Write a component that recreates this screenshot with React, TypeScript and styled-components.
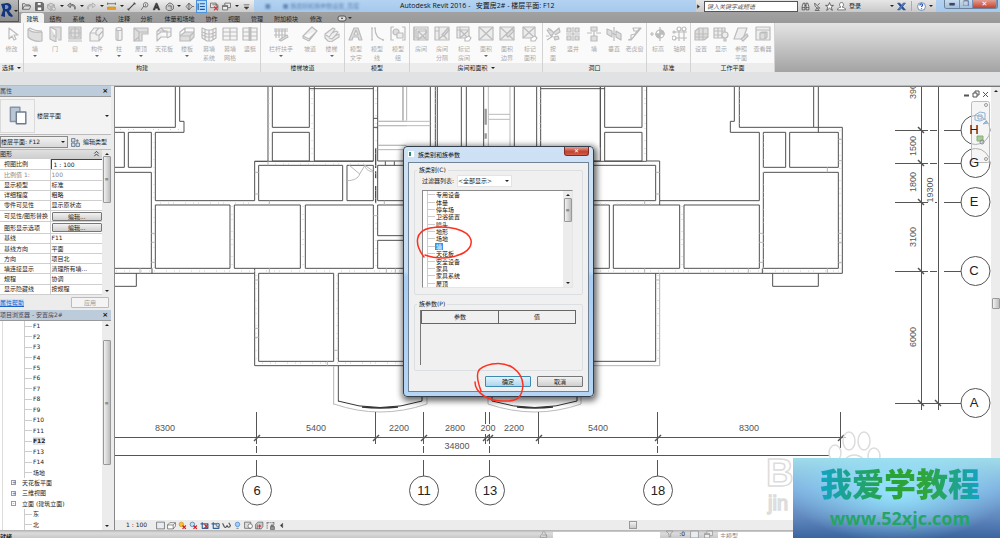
import React from 'react';
import styled, { createGlobalStyle } from 'styled-components';

const ui = '"DejaVu Sans", "Noto Sans CJK SC", sans-serif';
const drafting = '"Liberation Sans", "Noto Sans CJK SC", sans-serif';

const Global = createGlobalStyle`
  *, *::before, *::after { box-sizing: border-box; }
  body { margin: 0; background: #fff; color: #222; font: 6px/8px ${ui}; overflow: hidden; }
  button, input, select { font: inherit; color: inherit; margin: 0; padding: 0; border: 0; background: none; border-radius: 0; }
  button { cursor: pointer; white-space: nowrap; }
  select { appearance: none; }
  ul { list-style: none; margin: 0; padding: 0; }
  svg { display: block; flex: none; }
`;

const App_ = styled.div`
  position: relative;
  display: flex;
  flex-direction: column;
  height: 100vh;
  overflow: hidden;
`;

/* ---------- icons ---------- */

const G = '#bcbcbc';
const L = '#dedede';

const art: Record<string, React.ReactNode> = {
  cursor: <path d="M5 2v11l3-3 2 4 2-1-2-4h4z" />,
  wall: <path d="M1 3c3 3 8 4 14 3v9C9 16 4 14 1 11zM1 3l2-1c3 2 8 3 12 3" fill={L} />,
  door: <><path d="M3 1h11v13h-3M3 1v12l6 3V4z" fill={L} /><path d="M7 9v2" /></>,
  window: <><path d="M2 1h12v12H2zM1 15h14" fill={L} /><path d="M8 1v12M2 7h12M4 3h8v8H4z" /></>,
  component: <path d="M1 7l4-5h9v8l-4 5H1zM1 7h6V5l3-3M7 9v-2M7 9h3l4-4M10 9v6" fill="#f1f1f1" />,
  column: <path d="M5 3c0-2 6-2 6 0v10c0 2-6 2-6 0zM5 3c0 2 6 2 6 0M7 5v9" fill="#f1f1f1" />,
  roof: <><path d="M1 2h14v6H9v7H1z" fill={L} /><path d="M1 2l5 4h9M6 6v9M1 15l5-4" /></>,
  ceiling: <><path d="M1 5l4-3h10v8l-4 2M1 5v10l4-4h6V5z" fill="#f4f4f4" /><path d="M1 9l4-3h10M5 2l4 4" /></>,
  floor: <><path d="M1 10l5-4h9v5l-4 4H1z" fill={L} /><path d="M1 10V6l5-4h9v4M6 2v4M1 10h10v5M11 10l4-4" /></>,
  curtain: <><path d="M1 2l5 2 4 0 5-2v10l-5 3H6l-5-3z" fill="#f4f4f4" /><path d="M4 3v11M8 4v11M12 3v11M1 6l5 2h4l5-2M1 9l5 2h4l5-2" /></>,
  grid: <><path d="M1 2h14v12H1z" fill="#f4f4f4" /><path d="M1 6h14M1 10h14M8 2v12" /></>,
  mullion: <><path d="M1 2h14v12H1z" fill="#f4f4f4" /><path d="M1 6h14M1 10h14" /><path d="M8 1v14" strokeWidth="3" /></>,
  railing: <><path d="M1 3h14M1 5h14M1 9h12M3 3v9M6 3v9M9 3v9M12 3v9" /><path d="M6 14l8-5 1 2-7 4z" fill={L} /></>,
  ramp: <path d="M1 10l9-9 5 4-8 10-6-3zM1 10l6 3 8-8" fill="#eee" />,
  stair: <path d="M1 8l8-6 2 1-3 4 4-2 2 1-3 4 4-2v3l-8 5-3-1-3-3zM2 9l3 2 3-4M5 12l3 1 3-3" fill="#eee" />,
  textA: <path d="M1 14L6 2h4l4 12h-3l-1-3H5l-1 3zM6 9h4L8 4z" fill={L} />,
  line: <path d="M3 2v12M6 2c0 7 3 11 9 12M2 2h2M2 14h2M5 2h2M14 13v2" />,
  group: <><path d="M4 1H1v13h3M12 1h3v13h-3" /><circle cx="6" cy="6" r="3" fill={L} /><path d="M7 7h6v5H7z" fill="#eee" /></>,
  room: <><path d="M1 1h14v13H1zM3 3h10v9H3z" fill="#ececec" /><path d="M1 1v13M5 5h9M5 5v9M5 5l9 9M14 6l-9 8" /></>,
  roomSep: <><path d="M1 1h14v13H1z" fill="#ececec" /><path d="M5 1v13M1 5h4M5 13l9-8M8 8l5 5" /><path d="M8 9l6-7 1 2-5 6z" fill={L} /></>,
  roomTag: <><path d="M1 1h12v11H1z" fill="#ececec" /><path d="M1 4h12M4 1v11M4 4l8 8M12 5l-8 7" /><path d="M9 12l4-2 2 2-2 3H9z" fill="#fff" /></>,
  area: <><path d="M1 1h14v13H1z" fill="#ececec" /><path d="M1 1l14 13M15 1L1 14" /></>,
  areaLine: <><path d="M1 1h14v13H1z" fill="#ececec" /><path d="M1 1l14 13M15 1L1 14" /><path d="M7 9l6-6 2 2-6 6z" fill={L} /></>,
  areaTag: <><path d="M1 1h12v11H1z" fill="#ececec" /><path d="M1 1l12 11M13 1L1 12" /><path d="M9 12l4-2 2 2-2 3H9z" fill="#fff" /></>,
  byFace: <><path d="M2 4h4l3 3-3 3zM8 7l6-5 1 4-5 3M2 14l6-4M9 11l4-1 1 3-4 1z" fill={L} /><path d="M3 2l3 2M1 10h3" /></>,
  shaft: <path d="M2 2h4v4H2zM10 2h4v4h-4zM2 10h4v4H2zM10 10h4v4h-4zM8 1v14M1 8h14" fill={L} />,
  wallOpen: <path d="M5 1h6v4H5zM5 10h6v5H5zM1 7h5M10 7h5M8 5v5" fill={L} />,
  vertical: <path d="M1 3l5 2v6L1 8zM10 5l5 3v6l-5-3zM8 1v14M6 7l4 2" fill={L} />,
  dormer: <path d="M1 14l3-1V9l4-1 5-6h-7M1 14h3l10-12h-8l1 3h5" />,
  level: <><path d="M0 8h4M2 6v4" /><circle cx="10" cy="8" r="4" fill="#fff" /><path d="M10 4v4h4a4 4 0 0 0-4-4M10 12V8H6a4 4 0 0 0 4 4" fill={G} /><path d="M10 1v14M5 8h10" /></>,
  axis: <><path d="M3 6h12M3 12h12M7 4v11M12 4v11" /><circle cx="7" cy="3" r="2" fill="#fff" /><circle cx="12" cy="3" r="2" fill="#fff" /><circle cx="2" cy="6" r="1" /><circle cx="2" cy="12" r="2" fill="#fff" /></>,
  plane: <><path d="M2 5l4-3h9v9l-4 3H2z" fill={L} /><path d="M2 8h13M2 11h13M6 2v12M10 2v12" /></>,
  show: <><path d="M1 2h11v10H1z" fill="#eee" /><path d="M1 5h11M1 9h11M5 2v10M9 2v10" /><circle cx="12" cy="9" r="3" fill="#eee" /><path d="M11 13h2v2h-2z" /></>,
  refPlane: <><path d="M5 2h9l-4 11H1z" fill="#eee" /><path d="M8 13l6-5 1 2-5 5z" fill={L} /></>,
  viewer: <><path d="M1 1h14v13H1zM1 4h14" fill="#eee" /><path d="M5 7l2-1h5v5l-2 2H5zM5 7h5v6M10 7l2-1" fill={L} /></>,
  open: <path d="M1 13V3h4l2 2h6v2M1 13l3-6h12l-3 6z" fill="#ddd" />,
  save: <><path d="M1 1h12l2 2v12H1z" fill="#777" /><path d="M4 1h7v5H4zM4 9h8v6H4z" fill="#fff" /></>,
  sync: <><path d="M1 5l6-3 6 3v6l-6 4-6-4zM1 5l6 3 6-3M7 8v7" fill="#ccc" /><circle cx="12" cy="12" r="3" fill="#ddd" /></>,
  undo: <path d="M6 2L1 6l5 4V7c5-1 8 0 8 6 2-5 0-9-8-9z" fill="#bbb" />,
  redo: <path d="M10 2l5 4-5 4V7c-5-1-8 0-8 6-2-5 0-9 8-9z" fill="#ddd" />,
  measure: <><path d="M1 3h14M1 1v4M15 1v4" stroke="#444" /><path d="M1 9h14v4H1z" fill="#e8a526" stroke="#c18612" /></>,
  dim: <path d="M2 14L14 2M1 12l3 3M12 1l3 3" strokeWidth="2" />,
  tag: <><circle cx="10" cy="5" r="4" fill="#eee" /><path d="M7 7l-5 7M10 3v5" /></>,
  bigA: <path d="M2 14L7 2h2l5 12h-3l-1-3H6l-1 3zM7 8h2L8 5z" fill="#333" />,
  house: <><path d="M2 7l5-5h4l4 4v6l-4 3H5l-3-3z" fill="#ccc" /><path d="M5 7h6v6" /></>,
  section: <path d="M7 2l6 6-6 6-5-6zM7 2v12M13 8h3" fill="#ccc" />,
  thin: <><path d="M2 2v12" stroke="#235a9b" strokeWidth="2" /><path d="M5 3h9M5 8h9M5 13h9" stroke="#235a9b" strokeWidth="2" /></>,
  closeWin: <><path d="M1 2h10v8H1zM4 5h10v8" fill="#eee" /><path d="M7 8l7 7M14 8l-7 7" stroke="#d33" strokeWidth="2" /></>,
  windows: <path d="M1 6h9v8H1zM5 6V2h10v8h-5M1 8h9" fill="#eee" />,
  custom: <><path d="M3 5h10" /><path d="M4 9h8l-4 4z" fill="#333" /></>,
  right: <path d="M4 2l8 6-8 6z" fill="#222" />,
  binocular: <path d="M2 14V8l2-6h3v12zM9 14V2h3l2 6v6zM7 6h2M2 10h5M9 10h5" fill="#ddd" />,
  dish: <path d="M3 2c0 7 3 9 9 9zM8 6l4-4M7 11l-3 4h7z" fill="#ddd" />,
  star: <path d="M8 1l2 5h5l-4 3 2 6-5-4-5 4 2-6-4-3h5z" fill="#fff" />,
  user: <path d="M8 1c5 0 4 7 1 8 4 1 6 2 6 5H1c0-3 2-4 6-5C4 8 3 1 8 1z" fill="#fff" />,
  exchange: <><path d="M1 2h4l10 12h-4z" fill="#244f94" stroke="#244f94" /><path d="M11 2h4L5 14H1z" fill="#5c7fb8" stroke="#244f94" /></>,
  help: <><circle cx="8" cy="8" r="7" fill="#fff" stroke="#3461a8" /><path d="M5 6c0-4 6-3 5 0-1 1-2 1-2 3M8 11v2" stroke="#2457b0" strokeWidth="2" fill="none" /></>,
  sheet: <path d="M1 2h14v12H1z" fill="#e9edf3" />,
  box: <path d="M1 7l4-4h10v6l-4 5H1zM1 7h10v7M11 7l4-4" fill="#fff" />,
  sun: <><circle cx="6" cy="6" r="4" fill="#f6c238" stroke="#c98d15" /><path d="M8 8l6 6M14 8l-6 6" stroke="#c22" strokeWidth="2" /></>,
  shadow: <><circle cx="6" cy="6" r="4" fill="#c8def5" stroke="#2c68ab" /><path d="M8 8l6 6M14 8l-6 6" stroke="#c22" strokeWidth="2" /></>,
  crop: <><path d="M1 5h13v8H4V2" stroke="#335f95" strokeWidth="2" /><path d="M8 6l6 7M14 6l-6 7" stroke="#c22" strokeWidth="2" /></>,
  cropOn: <><path d="M1 5h13v8H4V2" stroke="#335f95" strokeWidth="2" /><circle cx="12" cy="7" r="3" fill="#9ed0ff" /></>,
  glasses: <path d="M1 4l3 6c2 3 4 1 5-2 1 4 5 4 6 0l-3-5" strokeWidth="2" />,
  bulb: <><circle cx="8" cy="6" r="4" fill="#9ed0ff" stroke="#3a7cc0" /><path d="M6 13h4" /></>,
  reveal: <><path d="M1 2h11v11H1z" fill="#ddd" /><circle cx="11" cy="9" r="4" fill="#fff" /></>,
  analytic: <><path d="M1 6l4-4h9v8l-3 4H1zM4 6v8M8 6v8" fill="#ccc" /><path d="M6 9h5" stroke="#c22" strokeWidth="2" /></>,
  constraint: <><path d="M2 14V3h12v5M1 3h3M12 3h3" strokeDasharray="3 1" /><path d="M8 10h7v5H8zM9 10V7h4v3" fill="#999" /></>,
  left: <path d="M10 4v8L6 8z" fill="#333" />,
  typeEdit: <><path d="M1 1h6v6H1zM1 9h6v6H1zM9 9h6v6H9z" fill="#cfe0f3" /><path d="M9 5h5M11 2v6" /></>,
  preview: <><path d="M2 1h8v12H2z" fill="#b9c6d6" stroke="#8794a5" /><path d="M7 5h8v10H7z" fill="#fff" stroke="#6d7b8d" /></>,
  link: <path d="M2 13c0-4 3-4 4-7 0-4 5-4 5 0 1 2 3 3 3 7zM6 9h8" fill="#ddd" />,
  filter: <path d="M2 2h12l-4 5v5H7V7z" fill="#ddd" />,
  collapse: <path d="M3 8l5-5 5 5M3 14l5-5 5 5" strokeWidth="2" />,
};

function Icon({ name, size = 10, tone = '#555' }: { name: string; size?: number; tone?: string }) {
  return (
    <svg width={size} height={size} viewBox="0 0 16 16" fill="none" stroke={tone} strokeWidth="1.2" strokeLinejoin="round" aria-hidden="true">
      {art[name]}
    </svg>
  );
}

const Caret = styled.i<{ $up?: boolean }>`
  width: 0;
  height: 0;
  flex: none;
  border: 2px solid transparent;
  border-top: ${(p) => (p.$up ? '0' : '2px solid #222')};
  border-bottom: ${(p) => (p.$up ? '2px solid #222' : '0')};
`;

/* ---------- title bar and ribbon ---------- */

const Head = styled.header`
  position: relative;
  flex: none;
`;

const TitleBar = styled.div`
  display: flex;
  height: 12px;
  padding-left: 19px;
  background: linear-gradient(#b4d3f2, #a5c8ec);
`;

const QuickBar = styled.div`
  display: flex;
  align-items: center;
  justify-content: space-between;
  width: 235px;
  padding: 0 3px;
  background: linear-gradient(#eee, #cbcbcb);
`;

const IconButton = styled.button<{ $on?: boolean }>`
  display: flex;
  align-items: center;
  justify-content: center;
  height: 11px;
  min-width: 4px;
  background: ${(p) => (p.$on ? '#b9dcff' : 'none')};
  outline: ${(p) => (p.$on ? '1px solid #4c93dc' : 'none')};
`;

const GlassTab = styled.div`
  display: flex;
  align-items: center;
  gap: 12px;
  width: 138px;
  padding-left: 11px;
  overflow: hidden;
  white-space: nowrap;
  color: #5f86b2;
  filter: blur(1px);
`;

const Title = styled.h1`
  flex: 1;
  margin: 0;
  padding-left: 8px;
  font: 7px/12px "Open Sans", "Noto Sans CJK SC", sans-serif;
  white-space: pre;
  color: #111;
`;

const InfoBar = styled.div`
  display: flex;
  align-items: center;
  width: 240px;
  gap: 3px;
  padding-right: 3px;
  margin-right: 8px;
  background: linear-gradient(#e6e6e6, #c9c9c9);
`;

const Search = styled.input`
  width: 94px;
  height: 11px;
  padding: 0 2px;
  border: 1px solid #555;
  background: #fff;
  font-style: italic;
  &::placeholder { color: #555; opacity: 1; }
`;

const WindowButtons = styled.div`
  display: flex;
  height: 9px;
  margin-right: 2px;
  border: 1px solid #6d8199;
  border-top: 0;
  border-radius: 0 0 3px 3px;
  overflow: hidden;
`;

const WindowButton = styled.button<{ $w: number; $close?: boolean }>`
  width: ${(p) => p.$w}px;
  color: ${(p) => (p.$close ? '#fff' : '#445')};
  font-size: 7px;
  line-height: 8px;
  font-weight: bold;
  background: ${(p) => (p.$close ? 'linear-gradient(#e39e93, #c5412d)' : 'linear-gradient(#c9dcf0, #a3bedb)')};
  border-right: 1px solid #7b90aa;
`;

const AppButton = styled.button`
  position: absolute;
  left: 0;
  top: 0;
  display: flex;
  align-items: center;
  width: 19px;
  height: 22px;
  background: linear-gradient(#b9b9b9, #8d8d8d);
  border-right: 1px solid #555;
  border-bottom: 1px solid #555;
`;

const Tabs = styled.nav`
  display: flex;
  align-items: end;
  height: 11px;
  padding-left: 21px;
  background: linear-gradient(#a2a2a2, #999);
`;

const Tab = styled.button<{ $on?: boolean; $w: number }>`
  width: ${(p) => p.$w}px;
  height: 10px;
  line-height: 9px;
  color: ${(p) => (p.$on ? '#111' : '#222')};
  background: ${(p) => (p.$on ? '#f1f1f1' : 'none')};
  border-radius: 2px 2px 0 0;
`;

const RibbonToggle = styled(IconButton)`
  margin-left: 9px;
`;

const Ribbon = styled.div`
  display: flex;
  height: 49px;
  background: linear-gradient(#e4e4e4, #a3a3a3);
`;

const Panel = styled.section`
  display: flex;
  flex-direction: column;
  border-right: 1px solid #d3d3d3;
  background: #fafafa;
`;

const PanelTools = styled.div`
  flex: 1;
  display: flex;
  padding-top: 3px;
`;

const PanelName = styled.h2`
  display: flex;
  align-items: center;
  justify-content: center;
  gap: 3px;
  height: 9px;
  margin: 0;
  font-size: 6px;
  font-weight: 400;
  background: #ececec;
`;

const Tool = styled.button<{ $w: number }>`
  display: flex;
  flex-direction: column;
  align-items: center;
  width: ${(p) => p.$w}px;
  gap: 2px;
  color: #aaa;
  line-height: 9px;
  white-space: pre;
  ${Caret} { opacity: 0.7; }
`;

const OptionsBar = styled.div`
  height: 14px;
  background: #e1e2e4;
  border-bottom: 1px solid #bbb;
`;

type ToolDef = [label: string, icon: string, width: number, menu?: boolean];

const panels: { name: string; menu?: boolean; tools: ToolDef[] }[] = [
  { name: '选择', menu: true, tools: [['修改', 'cursor', 23]] },
  {
    name: '构建',
    tools: [
      ['墙', 'wall', 22, true], ['门', 'door', 18], ['窗', 'window', 22], ['构件', 'component', 22, true],
      ['柱', 'column', 22, true], ['屋顶', 'roof', 22, true], ['天花板', 'ceiling', 24], ['楼板', 'floor', 22, true],
      ['幕墙\n系统', 'curtain', 22], ['幕墙\n网格', 'grid', 20], ['竖梃', 'mullion', 20],
    ],
  },
  { name: '楼梯坡道', tools: [['栏杆扶手', 'railing', 40, true], ['坡道', 'ramp', 18], ['楼梯', 'stair', 25, true]] },
  { name: '模型', tools: [['模型\n文字', 'textA', 22], ['模型\n线', 'line', 20], ['模型\n组', 'group', 22]] },
  {
    name: '房间和面积',
    menu: true,
    tools: [
      ['房间', 'room', 22], ['房间\n分隔', 'roomSep', 20], ['标记\n房间', 'roomTag', 24],
      ['面积', 'area', 20, true], ['面积\n边界', 'areaLine', 22], ['标记\n面积', 'areaTag', 24],
    ],
  },
  {
    name: '洞口',
    tools: [['按\n面', 'byFace', 20], ['竖井', 'shaft', 20], ['墙', 'wallOpen', 22], ['垂直', 'vertical', 18], ['老虎窗', 'dormer', 23]],
  },
  { name: '基准', tools: [['标高', 'level', 22], ['轴网', 'axis', 21]] },
  { name: '工作平面', tools: [['设置', 'plane', 20], ['显示', 'show', 20], ['参照\n平面', 'refPlane', 20], ['查看器', 'viewer', 23]] },
];

const tabs: [string, number][] = [
  ['建筑', 23], ['结构', 23], ['系统', 23], ['插入', 23], ['注释', 22], ['分析', 23], ['体量和场地', 43],
  ['协作', 21], ['视图', 24], ['管理', 22], ['附加模块', 36], ['修改', 24],
];

const quick = ['open', 'save', 'sync', '', 'undo', '', 'redo', '', 'measure', '', 'dim', 'tag', 'bigA', 'house', '', 'section', 'thin', 'closeWin', 'windows', '', 'custom'];

const LoginButton = styled.button`
  flex: 1;
  text-align: left;
`;

const Divider = styled.span`
  width: 1px;
  height: 10px;
  margin: 0 2px;
  background: #aaa;
`;

function RibbonHead() {
  return (
    <Head>
      <TitleBar>
        <QuickBar>
          {quick.map((n, i) => (
            <IconButton key={i} $on={n === 'thin'} aria-label={n || 'menu'}>
              {n ? <Icon name={n} size={9} tone={n === 'redo' || n === 'sync' ? '#999' : '#444'} /> : <Caret />}
            </IconButton>
          ))}
        </QuickBar>
        <GlassTab><span>■</span><span>■ 族类别和族参数设置_百度</span></GlassTab>
        <Title>{'Autodesk Revit 2016 -   安置房2# - 楼层平面: F12'}</Title>
        <InfoBar>
          <Icon name="right" size={5} />
          <Search placeholder="键入关键字或短语" aria-label="键入关键字或短语" />
          <Icon name="binocular" size={9} tone="#333" />
          <Icon name="dish" size={9} tone="#333" />
          <Icon name="star" size={9} tone="#333" />
          <Icon name="user" size={9} tone="#444" />
          <LoginButton>登录</LoginButton>
          <Caret />
          <Icon name="exchange" size={9} />
          <Divider />
          <Icon name="help" size={9} />
          <Caret />
        </InfoBar>
        <WindowButtons>
          <WindowButton $w={15} aria-label="最小化">▬</WindowButton>
          <WindowButton $w={13} aria-label="还原">❐</WindowButton>
          <WindowButton $w={24} $close aria-label="关闭">✕</WindowButton>
        </WindowButtons>
      </TitleBar>
      <AppButton aria-label="应用程序菜单">
        <svg width="14" height="20" viewBox="0 0 14 20">
          <path d="M1 3l6-1c5 0 6 6 2 8l4 5-1 1-3-1-3-5-1 1v5l-4-1 2-6z" fill="#14357c" />
          <path d="M5 4h2c2 1 2 3 0 4H5z" fill="#7e93bd" />
        </svg>
        <Caret />
      </AppButton>
      <Tabs>
        {tabs.map(([t, w], i) => <Tab key={t} $w={w} $on={i === 0}>{t}</Tab>)}
        <RibbonToggle aria-label="最小化功能区">
          <svg width="16" height="8" viewBox="0 0 16 8">
            <rect x="1" y="2" width="8" height="5" rx="2" fill="#ddd" stroke="#555" />
            <path d="M4 5l1-2 1 2zM11 3h4l-2 2z" fill="#333" />
          </svg>
        </RibbonToggle>
      </Tabs>
      <Ribbon>
        {panels.map((p) => (
          <Panel key={p.name}>
            <PanelTools>
              {p.tools.map(([label, icon, w, menu]) => (
                <Tool key={label + icon} $w={w}>
                  <Icon name={icon} size={16} tone={G} />
                  <span>{label}</span>
                  {menu && <Caret />}
                </Tool>
              ))}
            </PanelTools>
            <PanelName>{p.name}{p.menu && <Caret />}</PanelName>
          </Panel>
        ))}
      </Ribbon>
      <OptionsBar />
    </Head>
  );
}

/* ---------- side panels ---------- */

const Body = styled.div`
  flex: 1;
  display: flex;
  min-height: 0;
`;

const Side = styled.aside`
  display: flex;
  flex-direction: column;
  flex: none;
  width: 115px;
  padding-right: 3px;
  background: #ececec;
  border-right: 1px solid #888;
`;

const PaneTitle = styled.h2`
  display: flex;
  justify-content: space-between;
  height: 11px;
  margin: 0;
  padding-right: 3px;
  font-size: 6px;
  line-height: 10px;
  font-weight: 400;
  color: #445;
  background: #bdccdb;
  border-bottom: 1px solid #999;
`;

const CloseX = styled.button`
  font-size: 7px;
  font-weight: bold;
  color: #111;
`;

const TypeRow = styled.button`
  display: flex;
  align-items: center;
  gap: 2px;
  height: 38px;
  padding-right: 2px;
  background: #f3f3f3;
  border-bottom: 1px solid #bbb;
`;

const TypeIcon = styled.span`
  display: grid;
  place-items: center;
  width: 35px;
  height: 34px;
  border: 1px solid #dadada;
`;

const Grow = styled.span`
  flex: 1;
  text-align: left;
`;

const InstanceRow = styled.div`
  display: flex;
  align-items: center;
  gap: 3px;
  height: 14px;
`;

const SelectWrap = styled.label<{ $w: number; $flat?: boolean }>`
  display: flex;
  align-items: center;
  width: ${(p) => p.$w}px;
  height: 12px;
  padding-right: 2px;
  background: ${(p) => (p.$flat ? '#fff' : 'linear-gradient(#f2f2f2, #d8d8d8)')};
  border: 1px solid ${(p) => (p.$flat ? '#e3e3e3' : '#888')};
  select { flex: 1; min-width: 0; height: 10px; outline: 0; }
`;

const EditType = styled.button`
  display: flex;
  align-items: center;
  gap: 3px;
`;

const PropsArea = styled.div`
  display: flex;
  height: 146px;
  border-top: 1px solid #bbb;
`;

const PropsTable = styled.table`
  flex: 1;
  height: 145px;
  border-collapse: collapse;
  table-layout: fixed;
  background: #fff;
  th, td { padding: 0; border-bottom: 1px solid #cfcfcf; font-weight: 400; text-align: left; white-space: nowrap; overflow: hidden; line-height: 8px; }
  tbody th { width: 50px; padding-left: 4px; border-right: 1px solid #cfcfcf; }
  tbody td { padding-left: 1px; }
  thead th { background: linear-gradient(#e0e0e0, #cfcfcf); }
`;

const GroupHead = styled.span`
  display: flex;
  justify-content: space-between;
  padding-right: 2px;
`;

const PropRow = styled.tr<{ $dim?: boolean }>`
  color: ${(p) => (p.$dim ? '#888' : '#222')};
`;

const ScaleInput = styled.input`
  display: block;
  width: 100%;
  height: 9px;
  padding-left: 2px;
  outline: 1px solid #444;
`;

const PushButton = styled.button<{ $w?: number; $off?: boolean; $primary?: boolean }>`
  display: block;
  width: ${(p) => (p.$w ? `${p.$w}px` : '100%')};
  height: ${(p) => (p.$w ? 11 : 9)}px;
  line-height: 7px;
  color: ${(p) => (p.$off ? '#999' : '#222')};
  background: ${(p) => (p.$primary ? 'linear-gradient(#e4f3fb, #acd6ee)' : p.$off ? '#f4f4f4' : 'linear-gradient(#f2f2f2, #cfcfcf)')};
  border: 1px solid ${(p) => (p.$primary ? '#3c8ab4' : p.$off ? '#bbb' : '#777')};
  border-radius: 1px;
`;

const HelpRow = styled.div`
  display: flex;
  align-items: center;
  justify-content: space-between;
  height: 15px;
  padding-right: 2px;
  a { color: #1a63c9; background: #cfe2f8; }
`;

const BarBox = styled.div`
  display: flex;
  flex-direction: column;
  align-items: center;
  flex: none;
  width: 9px;
  padding: 3px 0;
  background: #ececec;
`;

const Spacer = styled.span<{ $grow: number }>`
  flex: ${(p) => p.$grow};
`;

const Thumb = styled.span<{ $grow: number }>`
  flex: ${(p) => p.$grow};
  display: grid;
  place-items: center;
  width: 8px;
  min-height: 8px;
  font-size: 5px;
  color: #555;
  background: linear-gradient(90deg, #f0f0f0, #bdbdbd);
  border: 1px solid #999;
  border-radius: 1px;
`;

function Scrollbar({ before, size, after, plain }: { before: number; size: number; after: number; plain?: boolean }) {
  return (
    <BarBox>
      <Caret $up />
      <Spacer $grow={before} />
      <Thumb $grow={size}>{plain ? '' : '≡'}</Thumb>
      <Spacer $grow={after} />
      <Caret />
    </BarBox>
  );
}

const TreeArea = styled.div`
  flex: 1;
  display: flex;
  min-height: 0;
  background: #fff;
`;

const Tree = styled.ul`
  flex: 1;
  display: grid;
  grid-auto-rows: 1fr;
  margin-left: 2px;
  border-left: 1px solid #ddd;
`;

const TreeItem = styled.li<{ $depth: number; $on?: boolean }>`
  display: flex;
  align-items: center;
  gap: ${(p) => (p.$depth > 1 ? 1 : 6)}px;
  margin-left: ${(p) => (p.$depth > 1 ? 21 : 8)}px;
  font-weight: ${(p) => (p.$on ? 700 : 400)};
  border-left: ${(p) => (p.$depth > 1 ? '1px solid #ccc' : '0')};
  span { background: ${(p) => (p.$on ? '#e4e4e4' : 'none')}; }
  &::before {
    content: '';
    width: 7px;
    border-top: 1px solid #ccc;
    display: ${(p) => (p.$depth > 1 ? 'block' : 'none')};
  }
`;

const Toggle = styled.button`
  display: grid;
  place-items: center;
  width: 5px;
  height: 5px;
  font-size: 5px;
  line-height: 3px;
  color: #557;
  border: 1px solid #99a;
`;

const props_: [string, React.ReactNode, boolean?][] = [
  ['视图比例', <ScaleInput aria-label="视图比例" defaultValue="1 : 100" />],
  ['比例值 1:', '100', true],
  ['显示模型', '标准'],
  ['详细程度', '粗略'],
  ['零件可见性', '显示原状态'],
  ['可见性/图形替换', <PushButton>编辑...</PushButton>],
  ['图形显示选项', <PushButton>编辑...</PushButton>],
  ['基线', 'F11'],
  ['基线方向', '平面'],
  ['方向', '项目北'],
  ['墙连接显示', '清理所有墙...'],
  ['规程', '协调'],
  ['显示隐藏线', '按规程'],
];

const floors = Array.from({ length: 14 }, (_, i) => `F${i + 1}`);

function SidePanels() {
  return (
    <Side>
      <PaneTitle>属性<CloseX aria-label="关闭">×</CloseX></PaneTitle>
      <TypeRow>
        <TypeIcon><Icon name="preview" size={19} /></TypeIcon>
        <Grow>楼层平面</Grow>
        <Caret />
      </TypeRow>
      <InstanceRow>
        <SelectWrap $w={68}>
          <select aria-label="实例"><option>楼层平面: F12</option></select>
          <Caret />
        </SelectWrap>
        <EditType><Icon name="typeEdit" size={9} tone="#456" />编辑类型</EditType>
      </InstanceRow>
      <PropsArea>
        <PropsTable>
          <thead>
            <tr><th colSpan={2}><GroupHead>图形<Icon name="collapse" size={7} tone="#333" /></GroupHead></th></tr>
          </thead>
          <tbody>
            {props_.map(([k, v, dim]) => (
              <PropRow key={k} $dim={dim}><th scope="row">{k}</th><td>{v}</td></PropRow>
            ))}
          </tbody>
        </PropsTable>
        <Scrollbar before={1} size={44} after={86} />
      </PropsArea>
      <HelpRow><a href="#help">属性帮助</a><PushButton $w={38} $off>应用</PushButton></HelpRow>
      <PaneTitle>项目浏览器 - 安置房2#<CloseX aria-label="关闭">×</CloseX></PaneTitle>
      <TreeArea>
        <Tree>
          {[...floors, '场地'].map((f) => <TreeItem key={f} $depth={2} $on={f === 'F12'}><span>{f}</span></TreeItem>)}
          <TreeItem $depth={1}><Toggle aria-label="展开">+</Toggle><span>天花板平面</span></TreeItem>
          <TreeItem $depth={1}><Toggle aria-label="展开">+</Toggle><span>三维视图</span></TreeItem>
          <TreeItem $depth={1}><Toggle aria-label="折叠">-</Toggle><span>立面 (建筑立面)</span></TreeItem>
          <TreeItem $depth={2}><span>东</span></TreeItem>
          <TreeItem $depth={2}><span>北</span></TreeItem>
        </Tree>
        <Scrollbar before={14} size={120} after={58} />
      </TreeArea>
    </Side>
  );
}

/* ---------- drawing ---------- */

const Canvas = styled.main`
  position: relative;
  flex: 1;
  display: flex;
  flex-direction: column;
  min-width: 0;
`;

const DrawingRow = styled.div`
  flex: 1;
  display: flex;
  min-height: 0;
  overflow: hidden;
  border-top: 1px solid #777;
`;

const Plan = styled.svg`
  flex: 1;
  min-width: 0;
  height: 100%;
  font-family: ${drafting};
`;

const ViewBar = styled.div`
  display: flex;
  align-items: center;
  gap: 2px;
  height: 10px;
  padding-left: 11px;
  background: #ececec;
`;

const ScaleButton = styled.button`
  width: 28px;
  text-align: left;
`;

const HTrack = styled.div`
  flex: 1;
  display: flex;
  span:first-child { flex: 341; }
  span:last-child { flex: 363; }
`;

const HThumb = styled.i`
  width: 8px;
  height: 8px;
  background: linear-gradient(#f2f2f2, #c8c8c8);
  border: 1px solid #999;
`;

const bubblesX: [number, string][] = [[257, '6'], [424, '11'], [490, '13'], [658, '18']];
const bubblesY: [number, string][] = [[130, 'H'], [163, 'G'], [202, 'E'], [271, 'C'], [403, 'A']];
const dimsX: [number, string][] = [[165, '8300'], [316, '5400'], [399, '2200'], [455, '2800'], [488, '200'], [514, '2200'], [598, '5400'], [749, '8300']];
const dimsY: [number, number, string][] = [[916, 89, '3900'], [916, 146, '1500'], [916, 182, '1800'], [933, 190, '19300'], [916, 237, '3100'], [916, 337, '6000']];

function Drawing() {
  return (
    <Plan viewBox="115 87 876 433" preserveAspectRatio="xMinYMin slice">
      <g fill="none" stroke="#505050" strokeWidth="3">
        <g transform="translate(110 84) scale(.33333)">
          <path d="M15 130H196V8M209 8V112H222V145H136V350H434V232H474V8M15 145H43V250H15M55 145H124V250H55zM15 265H124V553H15M487 8V130H598V8M487 145H598V231H487zM598 14H790M613 8V231H790V8M803 8V231H890M434 232H790M446 244H698V350H446zM711 244H790V350H711zM890 244H803V350H890" />
          <path d="M136 363H360V553H136zM373 363H571V553H373zM586 363H790V553H586zM890 363H803V455H890M890 469H803V553H890M15 568H434V845H890M79 568V607H15M446 568H671V832H446zM890 568H685V832H890M685 846V952M826 232v12M853 232v12M790 103h13M790 130h13M126 553v15M434 553v15" />
          <path d="M797 192v60M797 262v20M797 306v50" strokeWidth="4" />
          <g stroke="#b5b5b5">
            <path d="M671 846V962M803 112H890M878 8V110M890 8V110M803 125H890M803 184H890M803 197H890M711 290c20 0 35-8 38-20L718 244M749 270L765 244 790 262M765 244c0 10 10 18 25 20" />
            <path d="M124 448h12M124 475h12M124 535h12M434 265h12M434 330h12M434 588h12M434 733h12M434 760h12M671 799h14M90 553v15M478 553v15M478 350v13M823 350v13M829 553v15M856 553v15M652 832v13M474 232v12M790 395h13" />
          </g>
        </g>
        <g transform="translate(370 84) scale(.33333)">
          <path d="M181 8V190M202 8V190M196 8V190M274 8V190M289 8V190M341 8V190M433 8V190M500 8V190M512 8V190M512 14H705M691 8V190" />
          <path d="M347 74v48M347 148v16" strokeWidth="7" stroke="#999" />
          <path d="M355 8V190M420 8V190M355 91h65M355 106h65M100 8v102M25 112h156M25 125h156M25 184h80" stroke="#bbb" />
        </g>
        <g transform="translate(590 84) scale(.33333)">
          <path d="M31 8V231M0 231H31M44 8V130H156V8M44 145H156V231H44zM170 8V231H209V350H508V145H421V112H433V8M448 8V130H671V8M685 8V145M671 130H757V568H0M520 145H587V250H520zM599 145H745V250H599zM520 265H745V553H520zM0 232H170M0 244H197V350H0M0 363H58V553H0M70 363H269V553H70zM282 363H508V553H282zM197 568V832H0M548 568V607H685V568M517 553v15M209 350v13" />
          <g stroke="#b5b5b5">
            <path d="M209 568V845H0M745 166h12M745 230h12M712 250v15M745 448h12M745 475h12M745 535h12M508 448h12M508 475h12M508 535h12M197 265h12M197 330h12M164 350v13M164 553v15M475 553v15M712 553v15M197 588h12" />
          </g>
        </g>
      </g>

      {/* fine hatching inside the walls */}
      <g fill="none" stroke="#ccc" strokeWidth="1" strokeDasharray="1 7 1 4 1 11">
        <path d="M120 129.500H180M154 134V270M160 203H252M275 164H370M116 271H590M256 275V362M262 363H400M337 275V360M232 206V268M303 206V268M269 90V160M312 90V160M376 90V270M600 271H840M840 130V270M763 134V268M739 90V128M592 204H655M645 90V160M682 206V268M658 275V362M436 90V145M540 90V145" />
      </g>

      {/* balcony arcs */}
      <g fill="none" stroke="#333">
        <path d="M338 401Q380 414 422 401V396M492 396V401Q535 414 577 401V396" />
        <path d="M362 407Q380 409 398 407M517 407Q535 409 553 407" strokeWidth="1.600" />
        <path d="M334 404Q380 420 427 404V396M488 396V404Q535 420 581 404V396" stroke="#bbb" />
      </g>

      {/* horizontal dimension chains */}
      <g stroke="#555" fill="none">
        <path d="M115 437.500H846M115 455.500H829M840.500 412V448M375.500 412v32M538.500 412v32M485.500 412v12M485.500 434v10" />
        {[257, 376, 424, 486, 490, 539, 658, 841].map((x) => <path key={x} d={`M${x - 3} 441l6-6`} strokeWidth="1.500" />)}
        {bubblesX.map(([x, t]) => (
          <g key={t}>
            <path d={`M${x - 0.5} 412v${t === '13' ? '12' : '32'}M${x - 0.5} 434v10M${x - 0.5} 446v7M${x - 0.5} 460v16`} />
            <circle cx={x} cy="490.500" r="14.500" fill="#fff" />
          </g>
        ))}
      </g>
      <g fill="#222" fontSize="13" textAnchor="middle">
        {bubblesX.map(([x, t]) => <text key={t} x={x} y="495">{t}</text>)}
      </g>
      <g fill="#555" fontSize="9" textAnchor="middle">
        {dimsX.map(([x, t]) => <text key={x} x={x} y="431">{t}</text>)}
        <text x="457" y="449">34800</text>
        {dimsY.map(([x, y, t]) => <text key={y} transform={`translate(${x} ${y}) rotate(-90)`}>{t}</text>)}
      </g>

      {/* vertical dimension chains */}
      <g stroke="#555" fill="none">
        <path d="M921.500 87V410M938.500 87V410M895 403.500H961" />
        {bubblesY.map(([y, t]) => (
          <g key={t}>
            {t !== 'A' && <path d={`M895 ${y + 0.5}h33M${t === 'E' ? 935 : 930} ${y + 0.5}h${t === 'E' ? 2 : 7}M944 ${y + 0.5}h17`} />}
            <path d={`M918 ${y - 3}l6 6`} strokeWidth="1.500" />
            <circle cx="975.500" cy={y} r="14.500" />
          </g>
        ))}
        <path d="M935 400l6 6" strokeWidth="1.500" />
      </g>

      {/* navigation bar and view window buttons */}
      <g fill="none" stroke="#555">
        <path d="M964 95.500h5" strokeWidth="2" />
        <path d="M973 93h4v4h-4zM975 93v-2h4v4h-2M983 92l5 5M988 92l-5 5" />
        <rect x="971.500" y="101.500" width="18" height="61" rx="2" fill="#eee" fillOpacity=".6" stroke="#bbb" />
        <circle cx="986" cy="105" r="1.500" stroke="#999" />
        <circle cx="986" cy="159" r="1.500" stroke="#999" />
        <path d="M975 115l5-3 5 1v6l-5 2-5-1zM978 115h4v4h-4z" stroke="#8fb1d3" />
        <path d="M983 124l3-3 2 2z" fill="#9cc0e4" stroke="#8fb1d3" />
        <path d="M977 136h6v5h-6z" fill="#a4cc93" stroke="#88b078" />
        <circle cx="982" cy="142" r="2" stroke="#889" />
      </g>
      <g fill="#222" fontSize="13" textAnchor="middle">
        {bubblesY.map(([y, t]) => <text key={t} x="974" y={y + 4}>{t}</text>)}
      </g>

      {/* watermark */}
      <g fill="#fff" stroke="#dcdcdc" strokeWidth="1.500">
        <ellipse cx="849" cy="441" rx="6" ry="9" fillOpacity=".6" />
        <ellipse cx="864" cy="441" rx="6" ry="9" fillOpacity=".6" />
        <ellipse cx="835" cy="453" rx="6" ry="8" fillOpacity=".6" />
        <ellipse cx="874" cy="456" rx="6" ry="8" fillOpacity=".6" />
        <path d="M842 470c0-20 24-20 26 0z" />
        <text x="766" y="486" fontSize="38" fontWeight="700">B</text>
        <text x="768" y="510" fontSize="20">jin</text>
      </g>
    </Plan>
  );
}

const viewIcons = ['sheet', 'box', 'sun', 'shadow', 'crop', 'cropOn', 'glasses', 'bulb', 'reveal', 'analytic', 'constraint', 'left'];

/* ---------- dialog ---------- */

const Dialog = styled.div`
  position: absolute;
  left: 288px;
  top: 60px;
  width: 191px;
  height: 251px;
  display: flex;
  flex-direction: column;
  padding: 0 4px 4px;
  border: 1px solid #333f4d;
  border-radius: 4px;
  background: linear-gradient(#cfe2f4, #c4dcf5 50%, #a9cdf3 52%, #b5d5f5);
  box-shadow: 1px 2px 6px 2px rgba(0, 0, 0, 0.6);
`;

const DialogTitle = styled.div`
  display: flex;
  align-items: start;
  gap: 4px;
  height: 15px;
  color: #111;
  h2 { flex: 1; margin: 0; font-size: 6px; line-height: 15px; font-weight: 400; }
`;

const TitleIcon = styled.i`
  width: 6px;
  height: 6px;
  margin-top: 4px;
  border: 1px solid #fff;
  background: linear-gradient(90deg, #2c8a6c 50%, #fff 50%);
`;

const DialogClose = styled.button`
  width: 25px;
  height: 9px;
  color: #fff;
  font-size: 6px;
  line-height: 8px;
  font-weight: bold;
  background: linear-gradient(#e2a196, #c2402b 60%, #d5604c);
  border: 1px solid #7c2c22;
  border-top: 0;
  border-radius: 0 0 3px 3px;
`;

const DialogBody = styled.div`
  flex: 1;
  display: flex;
  flex-direction: column;
  padding: 3px 5px 4px;
  background: #f0f0f0;
  border: 1px solid #6f8296;
`;

const Group = styled.fieldset<{ $h: number }>`
  display: flex;
  flex-direction: column;
  height: ${(p) => p.$h}px;
  margin: 0;
  padding: 0 9px 4px 6px;
  border: 1px solid #dcdfe2;
  border-radius: 2px;
  legend { padding: 0 2px; margin-left: -4px; line-height: 8px; }
`;

const ParamGroup = styled(Group)`
  margin-top: 5px;
  padding-right: 6px;
`;

const FilterRow = styled.div`
  display: flex;
  align-items: center;
  gap: 3px;
  height: 12px;
  margin: 1px 0 3px 1px;
`;

const ListBox = styled.div`
  display: flex;
  height: 98px;
  margin-left: 1px;
  background: #fff;
  border: 1px solid #8a8a8a;
  border-bottom-color: #e5e5e5;
  border-right-color: #e5e5e5;
`;

const List = styled.ul`
  flex: 1;
  display: grid;
  grid-auto-rows: 1fr;
  margin-left: 4px;
`;

const ListItem = styled.li<{ $on?: boolean }>`
  display: flex;
  align-items: center;
  line-height: 7px;
  border-left: 1px solid #ccc;
  &::before { content: ''; width: 7px; border-top: 1px solid #ccc; }
  span { padding: 0 1px; color: ${(p) => (p.$on ? '#fff' : '#111')}; background: ${(p) => (p.$on ? '#3593ef' : 'none')}; }
`;

const ParamBox = styled.div`
  height: 55px;
  margin: 2px 0 0 -1px;
  border-left: 1px solid #777;
`;

const ParamTable = styled.table`
  width: 100%;
  border-collapse: collapse;
  th { width: 50%; height: 13px; padding: 0; font-weight: 400; border: 1px solid #666; }
`;

const Actions = styled.div`
  display: flex;
  justify-content: flex-end;
  gap: 6px;
  margin-top: auto;
`;

const Marks = styled.svg`
  position: absolute;
  left: 11px;
  top: 76px;
  pointer-events: none;
`;

const families = ['专用设备', '体量', '停车场', '卫浴装置', '喷头', '地形', '场地', '墙', '天花板', '安全设备', '家具', '家具系统', '屋顶'];

function FamilyDialog() {
  return (
    <Dialog role="dialog" aria-label="族类别和族参数">
      <DialogTitle>
        <TitleIcon />
        <h2>族类别和族参数</h2>
        <DialogClose aria-label="关闭">✕</DialogClose>
      </DialogTitle>
      <DialogBody>
        <Group $h={129}>
          <legend>族类别(C)</legend>
          <FilterRow>
            <label htmlFor="filter">过滤器列表:</label>
            <SelectWrap as="span" $w={55} $flat>
              <select id="filter"><option>&lt;全部显示&gt;</option></select>
              <Caret />
            </SelectWrap>
          </FilterRow>
          <ListBox>
            <List>
              {families.map((f) => <ListItem key={f} $on={f === '墙'}><span>{f}</span></ListItem>)}
            </List>
            <Scrollbar before={2} size={22} after={60} />
          </ListBox>
        </Group>
        <ParamGroup $h={71}>
          <legend>族参数(P)</legend>
          <ParamBox>
            <ParamTable><thead><tr><th>参数</th><th>值</th></tr></thead></ParamTable>
          </ParamBox>
        </ParamGroup>
        <Actions>
          <PushButton $w={46} $primary>确定</PushButton>
          <PushButton $w={46}>取消</PushButton>
        </Actions>
      </DialogBody>
      <Marks width="110" height="180" viewBox="415 223 110 180" fill="none" stroke="#ff3020" strokeWidth="1.500" strokeLinecap="round">
        <path d="M424 257C414 244 415 231 430 228C447 225 468 229 471 240C473 251 459 257 443 258C436 258 430 257 425 255" />
        <path d="M481 391C474 372 477 367 492 364C509 361 522 371 523 385C522 398 517 401 506 401C489 402 475 393 475 382" />
      </Marks>
    </Dialog>
  );
}

/* ---------- status bar and banner ---------- */

const StatusBar = styled.footer`
  display: flex;
  align-items: start;
  gap: 5px;
  flex: none;
  height: 8px;
  overflow: hidden;
  background: linear-gradient(#b0b0b0, #dcdcdc 3px, #c8c8c8);
  p { margin: 3px 0 0; flex: 1; font-weight: bold; }
`;

const StatusField = styled.span<{ $w: number }>`
  width: ${(p) => p.$w}px;
  height: 8px;
  margin-top: 2px;
  padding-left: 2px;
  background: #fff;
  color: #888;
`;

const Banner = styled.a`
  position: absolute;
  right: 0;
  bottom: 0;
  display: flex;
  flex-direction: column;
  align-items: center;
  gap: 2px;
  width: 207px;
  height: 80px;
  padding: 2px 0 0 7px;
  text-decoration: none;
  background:
    radial-gradient(ellipse 110px 50px at 50% 42%, rgba(150, 232, 255, 0.95), transparent),
    linear-gradient(#9fdcea, #7fb0e0 40%, #5f86bd 75%, #3c659f);
`;

const BannerName = styled.strong`
  font: 900 32px/44px "Noto Sans CJK SC", sans-serif;
  color: transparent;
  background: linear-gradient(90deg, #12a3c4, #2aa336 45%, #2fa53a 65%, #12a3c4);
  background-clip: text;
`;

const BannerUrl = styled.span`
  font: 700 18px/24px "Open Sans", sans-serif;
  color: #24a566;
`;

export default function App() {
  return (
    <App_>
      <Global />
      <RibbonHead />
      <Body>
        <SidePanels />
        <Canvas>
          <DrawingRow>
            <Drawing />
            <Scrollbar before={206} size={8} after={206} plain />
          </DrawingRow>
          <ViewBar>
            <ScaleButton>1 : 100</ScaleButton>
            {viewIcons.map((n) => <IconButton key={n} aria-label={n}><Icon name={n} size={9} /></IconButton>)}
            <HTrack><span /><HThumb /><span /></HTrack>
          </ViewBar>
          <FamilyDialog />
        </Canvas>
      </Body>
      <StatusBar>
        <p>就绪</p>
        <Icon name="link" size={9} tone="#888" />
        <StatusField $w={107} />
        <Icon name="filter" size={9} tone="#888" />
        <span>:0</span>
        <Icon name="sheet" size={9} tone="#888" />
        <Icon name="windows" size={9} tone="#888" />
        <StatusField $w={282}>主模型</StatusField>
      </StatusBar>
      <Banner href="http://www.52xjc.com">
        <BannerName>我爱学教程</BannerName>
        <BannerUrl>www.52xjc.com</BannerUrl>
      </Banner>
    </App_>
  );
}
